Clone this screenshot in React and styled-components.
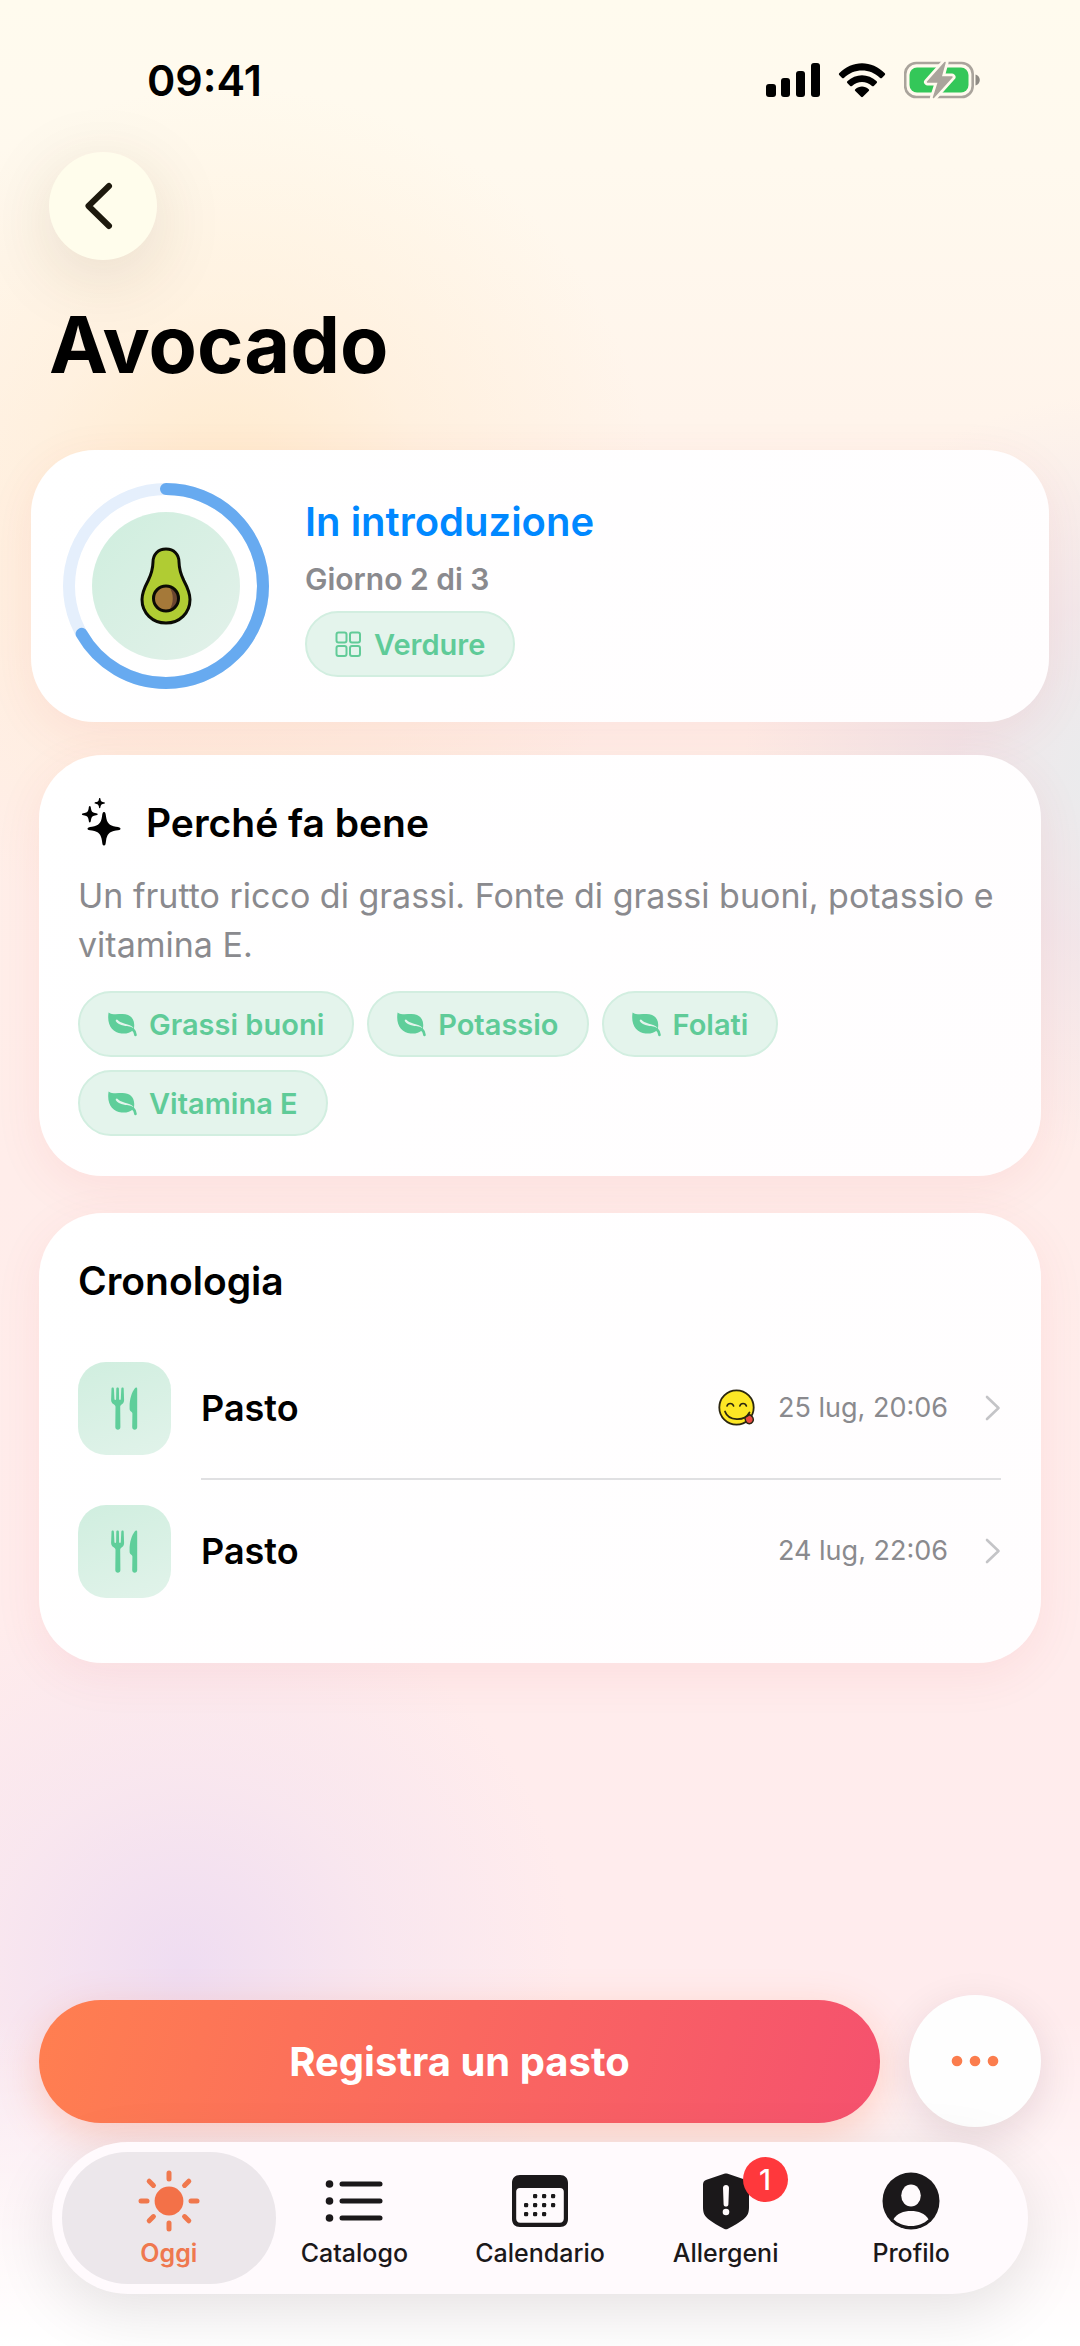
import React from 'react';
import styled, { createGlobalStyle } from 'styled-components';

const chips = ['Grassi buoni', 'Potassio', 'Folati', 'Vitamina E'];

const meals = [
  { id: 1, name: 'Pasto', date: '25 lug, 20:06', liked: true },
  { id: 2, name: 'Pasto', date: '24 lug, 22:06', liked: false },
];

/* ---------- icons ---------- */

const SignalIcon = () => (
  <svg width='54' height='36' viewBox='0 0 54 36' aria-hidden='true'>
    <rect x='0' y='22' width='10' height='13' rx='3' />
    <rect x='15' y='16' width='9' height='19' rx='3' />
    <rect x='30' y='9' width='9' height='26' rx='3' />
    <rect x='45' y='1' width='9' height='34' rx='3' />
  </svg>
);

const WifiIcon = () => (
  <svg width='48' height='36' viewBox='0 0 48 36' aria-hidden='true'>
    <path d='M1.2 11.2C14 -2.2 34 -2.2 46.8 11.2c.5.6.5 1.2 0 1.8l-2.9 2.9c-.6.6-1.2.6-1.8 0C32 6 16 6 5.900 15.900c-.6.6-1.200.6-1.800 0L1.200 13c-.5-.6-.5-1.200 0-1.800z' />
    <path d='M9.300 19.300c8.400-8.200 21-8.200 29.400 0 .5.6.5 1.200 0 1.800l-2.900 2.800c-.6.6-1.200.6-1.800 0-5.800-5.300-14.200-5.300-20 0-.6.6-1.200.6-1.800 0l-2.900-2.800c-.5-.6-.5-1.200 0-1.800z' />
    <path d='M17.300 27.200c4-3.600 9.400-3.600 13.400 0 .6.6.6 1.200 0 1.800l-5.800 5.700c-.6.6-1.200.6-1.800 0L17.300 29c-.6-.6-.6-1.200 0-1.800z' />
  </svg>
);

const BatteryIcon = () => (
  <svg width='76' height='38' viewBox='0 0 76 38' aria-hidden='true'>
    <rect x='1.200' y='2' width='67.500' height='34' rx='11' fill='none' stroke='#aaa49c' strokeWidth='2.600' />
    <path d='M71.500 13.500c2.600.8 4.300 3 4.300 5.500s-1.700 4.700-4.300 5.500z' fill='#8f8b84' />
    <rect x='5.500' y='6.500' width='59' height='25' rx='7.500' fill='#34c759' />
    <path d='M41 1.500 23.500 21h11L29.500 36.500 48 16H37z' fill='#fffaee' stroke='#fffaee' strokeWidth='7' strokeLinejoin='round' />
    <path d='M41 1.500 23.500 21h11L29.500 36.500 48 16H37z' fill='#aaa49c' stroke='#aaa49c' strokeWidth='1.500' strokeLinejoin='round' />
  </svg>
);

const BackIcon = () => (
  <svg width='32' height='52' viewBox='0 0 32 52' aria-hidden='true'>
    <path d='M26 6 5.500 26 26 46' fill='none' stroke='#1d190d' strokeWidth='6' strokeLinecap='round' strokeLinejoin='round' />
  </svg>
);

const AvocadoIcon = () => (
  <svg width='52' height='78' viewBox='0 0 52 78' aria-hidden='true'>
    <path
      d='M26 2c-8 0-13 5.500-13 13-.2 8-1.600 12-4.800 18.500C4.500 40.500 2 45.500 2 52.500 2 66 12.500 76 26 76s24-10 24-23.500c0-7-2.500-12-6.200-19C40.600 27 39.200 23 39 15 39 7.500 34 2 26 2z'
      fill='#b0cc33'
      stroke='#0b0b05'
      strokeWidth='3'
    />
    <circle cx='26' cy='51.500' r='12.500' fill='#a57939' />
    <path d='M29 39.500a12.500 12.500 0 0 1 0 24c5-7 5-17 0-24z' fill='#6a462f' />
    <circle cx='26' cy='51.500' r='12.500' fill='none' stroke='#0b0b05' strokeWidth='3' />
  </svg>
);

const GridIcon = () => (
  <svg width='27' height='27' viewBox='0 0 27 27' fill='none' stroke='#62cb98' strokeWidth='2' aria-hidden='true'>
    <rect x='1.500' y='1.500' width='10' height='10' rx='2' />
    <rect x='15' y='1.500' width='10' height='10' rx='2' />
    <rect x='1.500' y='15' width='10' height='10' rx='2' />
    <rect x='15' y='15' width='10' height='10' rx='2' />
  </svg>
);

const LeafIcon = () => (
  <svg width='29' height='25' viewBox='0 0 29 25' aria-hidden='true'>
    <path
      d='M.6.4C4 3 9 2 14.500 2c7 0 11.500 4 11.700 10.500.1 2-.1 3.700-.7 5.200-3 2.900-7.500 4.300-12 3.800C4.500 20.500-1.500 13 .6.400z'
      fill='#5fce9a'
    />
    <path d='M8.800 8.700c3.200 5 11 3 15.400 7.300' fill='none' stroke='#e4f4ec' strokeWidth='2.200' strokeLinecap='round' />
    <path d='M18.500 15.400c5.500.2 8.500 3.300 9 7.600' fill='none' stroke='#5fce9a' strokeWidth='2.600' strokeLinecap='round' />
  </svg>
);

const SparklesIcon = () => (
  <svg width='44' height='50' viewBox='-3 1 44 50' aria-hidden='true'>
    <path d='M23 15c1.500 0 1.600 1.500 2 4.500 1 6.500 3 9 10 10.300 3 .5 4.500.7 4.500 1.900s-1.500 1.400-4.500 1.900c-7 1.300-9 3.800-10 10.300-.4 3-.5 4.600-2 4.600s-1.600-1.600-2-4.600c-1-6.500-3-9-10-10.300-3-.5-4.500-.7-4.500-1.900s1.500-1.400 4.500-1.900c7-1.300 9-3.800 10-10.300.4-3 .5-4.500 2-4.500z' />
    <path d='M8.800 9c.9 0 .9 1 1.200 2.700.5 2.700 1.300 3.600 4 4.200 1.800.4 2.700.5 2.700 1.300s-.9.900-2.700 1.300c-2.700.6-3.500 1.500-4 4.200-.3 1.700-.3 2.700-1.200 2.700s-.9-1-1.200-2.700c-.5-2.700-1.300-3.600-4-4.200C1.800 18.100.9 18 .9 17.200s.9-.9 2.700-1.300c2.700-.6 3.500-1.500 4-4.200C7.900 10 7.900 9 8.800 9z' />
    <path d='M18.700.8c.7 0 .6.800.9 2 .3 1.400.9 2 2.300 2.300 1.200.2 1.900.2 1.900.9s-.7.700-1.900.9c-1.400.3-2 .9-2.300 2.300-.3 1.200-.2 2-.9 2s-.6-.8-.9-2c-.3-1.400-.9-2-2.300-2.300-1.200-.2-1.900-.2-1.900-.9s.7-.7 1.900-.9c1.400-.3 2-.9 2.300-2.300.3-1.200.2-2 .9-2z' />
  </svg>
);

const ForkKnifeIcon = () => (
  <svg width='28' height='43' viewBox='0 0 28 43' fill='#5fce9a' aria-hidden='true'>
    <path d='M1.700.5c.7 0 1.100.5 1.200 1.200L3.400 12c0 1.200 1.700 1.200 1.700 0L5.300 1.700c0-.8.600-1.200 1.300-1.200s1.300.4 1.300 1.200L8.100 12c0 1.200 1.700 1.200 1.700 0l.5-10.300c.1-.7.500-1.200 1.200-1.200.8 0 1.200.500 1.200 1.300l.4 11.200c.1 2.800-1.700 4-2.800 4.800-.8.600-1.100 1.200-1.100 2.200l.2 20c0 1.800-1.100 2.700-2.500 2.700s-2.600-.9-2.600-2.700l.2-20c0-1-.4-1.600-1.200-2.200C2.200 17 0 15.800.1 13L.5 1.800C.5 1 1 .5 1.700.5z' />
    <path d='M26.200 1.800c0-1.400-1.400-1.700-2.300-.6-3.200 4-5.300 11-5.300 18.300v2.300c0 1.200.5 2 1.400 2.700.9.700 1.400 1.300 1.400 2.300l-.2 13.200c0 1.800 1.100 2.700 2.500 2.700s2.500-.9 2.500-2.700z' />
  </svg>
);

const YumIcon = () => (
  <svg width='38' height='38' viewBox='0 0 38 38' fill='none' stroke='#2b2610' strokeLinecap='round' aria-hidden='true'>
    <circle cx='18.500' cy='18.500' r='17.200' fill='#fde725' strokeWidth='1.800' />
    <path d='M9 17c1-3.400 5.500-3.400 6.600 0M21.800 17c1-3.400 5.500-3.400 6.600 0' strokeWidth='1.600' />
    <path d='M7 22.500c3.300 9.500 19.500 10.500 24.500 1' strokeWidth='1.800' />
    <path d='M26.800 28.700l5-3c2.600 1.600 4.300 4.300 3 7-1.600 3-5.600 2.600-7-.300z' fill='#ea4a42' strokeWidth='1.400' strokeLinejoin='round' />
  </svg>
);

const ChevronIcon = () => (
  <svg width='16' height='28' viewBox='0 0 16 28' aria-hidden='true'>
    <path d='M2 3l11.500 11L2 25' fill='none' stroke='#c4c4c7' strokeWidth='2.600' strokeLinecap='round' strokeLinejoin='round' />
  </svg>
);

const DotsIcon = () => (
  <svg width='50' height='14' viewBox='0 0 50 14' fill='#fb7d4d' aria-hidden='true'>
    <circle cx='7' cy='7' r='5.300' />
    <circle cx='25' cy='7' r='5.300' />
    <circle cx='43' cy='7' r='5.300' />
  </svg>
);

const SunIcon = () => (
  <svg width='62' height='62' viewBox='0 0 62 62' aria-hidden='true'>
    <circle cx='31' cy='31' r='14.400' fill='#f37148' />
    <g stroke='#f0784d' strokeWidth='5' strokeLinecap='round'>
      {[0, 45, 90, 135, 180, 225, 270, 315].map((deg) => (
        <path key={deg} d='M31 3v6' transform={`rotate(${deg} 31 31)`} />
      ))}
    </g>
  </svg>
);

const ListIcon = () => (
  <svg width='62' height='62' viewBox='0 0 62 62' fill='#1b181a' aria-hidden='true'>
    {[14, 31, 48].map((y) => (
      <React.Fragment key={y}>
        <circle cx='6.500' cy={y} r='3.800' />
        <rect x='16.500' y={y - 2.5} width='43' height='5' rx='2.500' />
      </React.Fragment>
    ))}
  </svg>
);

const CalendarIcon = () => (
  <svg width='62' height='62' viewBox='0 0 62 62' fill='#1b181a' aria-hidden='true'>
    <path
      fillRule='evenodd'
      d='M11 5h40c5 0 8 3 8 8v36c0 5-3 8-8 8H11c-5 0-8-3-8-8V13c0-5 3-8 8-8zm0 13c-2.500 0-3.800 1.300-3.800 3.800v26.700c0 2.700 1.400 4.200 4 4.200h39.600c2.600 0 4-1.500 4-4.200V21.800c0-2.500-1.300-3.800-3.800-3.800z'
    />
    {[
      [26, 26], [35, 26], [44, 26],
      [17, 35], [26, 35], [35, 35], [44, 35],
      [17, 44], [26, 44], [35, 44],
    ].map(([x, y]) => (
      <rect key={`${x}-${y}`} x={x - 2} y={y - 2} width='4.200' height='4.200' rx='1.200' />
    ))}
  </svg>
);

const ShieldIcon = () => (
  <svg width='62' height='62' viewBox='0 0 62 62' aria-hidden='true'>
    <path
      d='M29.200 3.800c1.200-.5 2.400-.5 3.600 0l17.600 6c2.500.9 3.600 2.300 3.600 5V37c0 6-1.500 9-5.500 12.200-4.500 3.600-9.800 6.500-15.500 9.600-1.400.7-2.600.7-4 0-5.700-3.100-11-6-15.500-9.600C9.500 46 8 43 8 37V14.800c0-2.700 1.100-4.100 3.600-5z'
      fill='#1b181a'
    />
    <path d='M28 17.800c0-1.700 1.300-2.800 3-2.800s3 1.100 3 2.800l-.6 16.500c0 1.400-1 2.300-2.400 2.300s-2.400-.9-2.400-2.300z' fill='#fffafc' />
    <circle cx='31' cy='42' r='3.300' fill='#fffafc' />
  </svg>
);

const ProfileIcon = () => (
  <svg width='62' height='62' viewBox='0 0 62 62' aria-hidden='true'>
    <circle cx='31' cy='31' r='28.500' fill='#1b181a' />
    <ellipse cx='31' cy='25.500' rx='9.800' ry='11' fill='#fffafc' />
    <path d='M13.500 49.200C17 43.500 23.500 41 31 41s14 2.500 17.500 8.200C44 53.500 38 56 31 56s-13-2.500-17.500-6.800z' fill='#fffafc' />
  </svg>
);

const tabs = [
  { id: 'oggi', label: 'Oggi', Icon: SunIcon, active: true },
  { id: 'catalogo', label: 'Catalogo', Icon: ListIcon },
  { id: 'calendario', label: 'Calendario', Icon: CalendarIcon },
  { id: 'allergeni', label: 'Allergeni', Icon: ShieldIcon, badge: 1 },
  { id: 'profilo', label: 'Profilo', Icon: ProfileIcon },
];

/* ---------- parts ---------- */

const ProgressRing = ({ value, total, children }) => {
  const length = 2 * Math.PI * 97;

  return (
    <StyledRing>
      <svg viewBox='0 0 206 206' aria-hidden='true'>
        <circle cx='103' cy='103' r='97' stroke='#e5effc' />
        <circle
          cx='103'
          cy='103'
          r='97'
          stroke='#67aaf0'
          strokeLinecap='round'
          strokeDasharray={`${(length * value) / total} ${length}`}
          transform='rotate(-90 103 103)'
        />
      </svg>
      <RingCenter>{children}</RingCenter>
    </StyledRing>
  );
};

const MealRow = ({ meal }) => (
  <li>
    <MealLink href={`#pasto-${meal.id}`}>
      <MealTile>
        <ForkKnifeIcon />
      </MealTile>
      <MealBody>
        <MealName>{meal.name}</MealName>
        {meal.liked && <YumIcon />}
        <MealDate>{meal.date}</MealDate>
        <ChevronIcon />
      </MealBody>
    </MealLink>
  </li>
);

const App = () => {
  return (
    <>
      <GlobalStyle />
      <Screen>
        <StatusBar>
          <span>09:41</span>
          <StatusIcons>
            <SignalIcon />
            <WifiIcon />
            <BatteryIcon />
          </StatusIcons>
        </StatusBar>

        <Header>
          <BackButton type='button' aria-label='Indietro'>
            <BackIcon />
          </BackButton>
          <h1>Avocado</h1>
        </Header>

        <Content>
          <StatusCard>
            <ProgressRing value={2} total={3}>
              <AvocadoIcon />
            </ProgressRing>
            <StatusText>
              <h2>In introduzione</h2>
              <p>Giorno 2 di 3</p>
              <Chip>
                <GridIcon />
                Verdure
              </Chip>
            </StatusText>
          </StatusCard>

          <Card>
            <CardTitle>
              <SparklesIcon />
              Perché fa bene
            </CardTitle>
            <Description>
              Un frutto ricco di grassi. Fonte di grassi buoni, potassio e
              vitamina E.
            </Description>
            <ChipList>
              {chips.map((chip) => (
                <Chip as='li' key={chip}>
                  <LeafIcon />
                  {chip}
                </Chip>
              ))}
            </ChipList>
          </Card>

          <Card>
            <CardTitle>Cronologia</CardTitle>
            <MealList>
              {meals.map((meal) => (
                <MealRow key={meal.id} meal={meal} />
              ))}
            </MealList>
          </Card>
        </Content>

        <Dock>
          <Actions>
            <PrimaryButton type='button'>Registra un pasto</PrimaryButton>
            <MoreButton type='button' aria-label='Altro'>
              <DotsIcon />
            </MoreButton>
          </Actions>
          <TabBar>
            {tabs.map(({ id, label, Icon, active, badge }) => (
              <Tab key={id} href={`#${id}`} $active={active}>
                <TabIcon>
                  <Icon />
                  {badge && <Badge>{badge}</Badge>}
                </TabIcon>
                {label}
              </Tab>
            ))}
          </TabBar>
        </Dock>
      </Screen>
    </>
  );
};

export default App;

/* ---------- styles ---------- */

const GlobalStyle = createGlobalStyle`
  * {
    box-sizing: border-box;
  }

  body, h1, h2, p, ul {
    margin: 0;
    padding: 0;
  }

  body, button {
    font-family: Inter, 'Liberation Sans', sans-serif;
  }

  ul {
    list-style: none;
  }

  a {
    color: inherit;
    text-decoration: none;
  }

  button {
    border: none;
    cursor: pointer;
  }

  svg {
    display: block;
    flex: none;
  }
`;

const Screen = styled.div`
  min-height: 100vh;
  display: flex;
  flex-direction: column;
  color: #000;
  background:
    linear-gradient(to top, #fff 0, rgba(255, 255, 255, 0) 330px),
    radial-gradient(circle 390px at 17% 84%, rgba(228, 210, 244, 0.6), rgba(230, 214, 244, 0.25) 50%, rgba(232, 216, 244, 0) 100%),
    radial-gradient(circle 380px at 104% 33%, rgba(230, 236, 238, 0.9), rgba(230, 222, 234, 0.5) 45%, rgba(240, 226, 232, 0) 100%),
    radial-gradient(circle 430px at 21% 22%, rgba(255, 226, 180, 0.6), rgba(255, 230, 192, 0.28) 48%, rgba(255, 236, 208, 0) 100%),
    linear-gradient(to bottom, #fffbee 0, #fff9ee 7%, #fff4eb 18%, #ffefe9 34%, #ffedea 50%, #ffecec 70%, #ffecef 100%);
`;

const StatusBar = styled.div`
  display: flex;
  justify-content: space-between;
  align-items: center;
  padding: 54px 100px 46px 147px;
  font-size: 43px;
  font-weight: 600;
  line-height: 52px;
`;

const StatusIcons = styled.div`
  display: flex;
  align-items: center;
  gap: 18px;
`;

const Header = styled.header`
  padding: 0 49px;

  h1 {
    margin-top: 36px;
    font-size: 79px;
    font-weight: 700;
    line-height: 96px;
  }
`;

const BackButton = styled.button`
  width: 108px;
  height: 108px;
  padding: 0 8px 0 0;
  display: flex;
  justify-content: center;
  align-items: center;
  border-radius: 50%;
  background: #fffdec;
  box-shadow: 0 16px 72px rgba(70, 55, 25, 0.13);
`;

const Content = styled.main`
  display: flex;
  flex-direction: column;
  gap: 37px;
  padding: 58px 39px 36px;
`;

const Card = styled.section`
  padding: 41px 40px 40px 39px;
  border-radius: 64px;
  background: linear-gradient(135deg, #fff, #fffdfe);
  box-shadow: 0 12px 48px rgba(220, 60, 80, 0.08);
`;

const StatusCard = styled(Card)`
  display: flex;
  align-items: center;
  gap: 36px;
  margin: 0 -8px -4px;
  padding: 33px 32px;
`;

const StyledRing = styled.div`
  flex: none;
  width: 206px;
  height: 206px;
  display: grid;
  place-items: center;

  > * {
    grid-area: 1 / 1;
  }

  > svg {
    width: 100%;
    fill: none;
    stroke-width: 12px;
  }
`;

const RingCenter = styled.div`
  width: 148px;
  height: 148px;
  display: grid;
  place-items: center;
  border-radius: 50%;
  background: linear-gradient(135deg, #cfeede, #e3f1ea);
`;

const StatusText = styled.div`
  display: flex;
  flex-direction: column;
  align-items: flex-start;
  gap: 14px;
  padding-top: 2px;

  h2 {
    color: #0088ff;
    font-size: 40px;
    font-weight: 600;
    line-height: 50px;
  }

  p {
    color: #8a8a8e;
    font-size: 30px;
    font-weight: 600;
    line-height: 36px;
  }
`;

const Chip = styled.span`
  display: flex;
  align-items: center;
  gap: 12px;
  height: 66px;
  padding: 0 28px;
  border: 2px solid #d2eee0;
  border-radius: 33px;
  background: #e4f4ec;
  color: #5fcb98;
  font-size: 29px;
  font-weight: 600;
`;

const CardTitle = styled.h2`
  display: flex;
  align-items: center;
  gap: 24px;
  font-size: 39px;
  font-weight: 600;
  line-height: 54px;
`;

const Description = styled.p`
  margin: 21px 0 22px;
  color: #8a8a8e;
  font-size: 34px;
  line-height: 49px;
`;

const ChipList = styled.ul`
  display: flex;
  flex-wrap: wrap;
  gap: 13px;
`;

const MealList = styled.ul`
  margin-top: 29px;
`;

const MealLink = styled.a`
  display: flex;
  align-items: center;
  gap: 30px;
  height: 143px;
`;

const MealTile = styled.span`
  width: 93px;
  height: 93px;
  display: grid;
  place-items: center;
  border-radius: 28px;
  background: linear-gradient(160deg, #d0eedf, #e1f3ea);
`;

const MealBody = styled.span`
  flex: 1;
  align-self: stretch;
  display: flex;
  align-items: center;
  border-bottom: 2px solid transparent;

  li:not(:last-child) & {
    border-bottom-color: #e0e0e2;
  }
`;

const MealName = styled.span`
  flex: 1;
  font-size: 36px;
  font-weight: 600;
`;

const MealDate = styled.span`
  margin: 0 37px 0 22px;
  color: #8a8a8e;
  font-size: 27px;
`;

const Dock = styled.footer`
  margin-top: auto;
  padding-bottom: 52px;
`;

const Actions = styled.div`
  display: flex;
  align-items: center;
  gap: 29px;
  padding: 0 39px;
`;

const PrimaryButton = styled.button`
  flex: 1;
  height: 123px;
  border-radius: 62px;
  background: linear-gradient(105deg, #ff7f50, #f5516e);
  box-shadow: 0 12px 40px rgba(255, 127, 80, 0.3);
  color: #fff;
  font-size: 40px;
  font-weight: 700;
`;

const MoreButton = styled.button`
  width: 132px;
  height: 132px;
  padding: 0;
  display: grid;
  place-items: center;
  border-radius: 50%;
  background: #fefefe;
  box-shadow: 0 12px 40px rgba(60, 20, 40, 0.12);
`;

const TabBar = styled.nav`
  position: relative;
  display: flex;
  margin: 15px 52px 0;
  padding: 10px;
  border-radius: 76px;
  background: #fffafd;
  box-shadow: 0 16px 64px rgba(0, 0, 0, 0.11);
`;

const Tab = styled.a`
  flex: 1;
  display: flex;
  flex-direction: column;
  align-items: center;
  gap: 6px;
  height: 132px;
  padding-top: 18px;
  border-radius: 66px;
  background: ${({ $active }) => ($active ? '#ece7eb' : 'transparent')};
  color: ${({ $active }) => ($active ? '#ef784f' : '#1b181a')};
  font-size: 25px;
  font-weight: ${({ $active }) => ($active ? 600 : 500)};
  line-height: 30px;

  & + & {
    margin-left: -28px;
  }
`;

const TabIcon = styled.span`
  position: relative;
`;

const Badge = styled.span`
  position: absolute;
  top: -13px;
  left: 48px;
  width: 45px;
  height: 45px;
  display: grid;
  place-items: center;
  border-radius: 50%;
  background: #ff383c;
  color: #fff;
  font-size: 29px;
  font-weight: 500;
`;
